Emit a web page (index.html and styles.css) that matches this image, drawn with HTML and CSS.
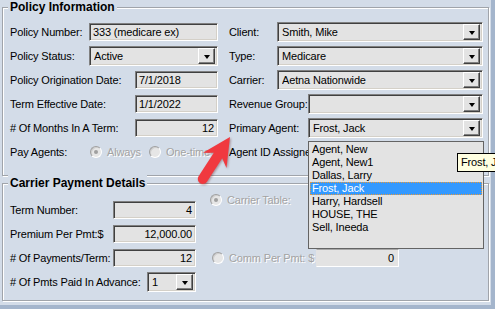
FILE: index.html
```html
<!DOCTYPE html>
<html>
<head>
<meta charset="utf-8">
<link rel="stylesheet" href="styles.css">
</head>
<body>
<div class="screen">
  <div class="main">
    <section class="group g1">
      <div class="gtitle">Policy Information</div>
      <div class="g1grid">
        <div class="cell"><span>Policy Number:</span><div class="field w-lg">333 (medicare ex)</div></div>
        <div class="cell"><span>Client:</span><div class="combo w-xl"><span class="val">Smith, Mike</span><i class="btn"></i></div></div>

        <div class="cell"><span>Policy Status:</span><div class="combo w-lg"><span class="val">Active</span><i class="btn"></i></div></div>
        <div class="cell"><span>Type:</span><div class="combo w-xl"><span class="val">Medicare</span><i class="btn"></i></div></div>

        <div class="cell"><span>Policy Origination Date:</span><div class="field w-sm">7/1/2018</div></div>
        <div class="cell"><span>Carrier:</span><div class="combo w-xl"><span class="val">Aetna Nationwide</span><i class="btn"></i></div></div>

        <div class="cell"><span>Term Effective Date:</span><div class="field w-sm">1/1/2022</div></div>
        <div class="cell"><span>Revenue Group:</span><div class="combo w-md"><span class="val"></span><i class="btn"></i></div></div>

        <div class="cell"><span># Of Months In A Term:</span><div class="field w-sm num">12</div></div>
        <div class="cell"><span>Primary Agent:</span><div class="combo w-md"><span class="val">Frost, Jack</span><i class="btn"></i></div></div>

        <div class="cell start"><span class="lbl-pay">Pay Agents:</span>
          <span class="radio checked"></span><span class="dis r-text">Always</span>
          <span class="radio"></span><span class="dis">One-time</span>
        </div>
        <div class="cell start"><span>Agent ID Assigned:</span></div>
      </div>
    </section>

    <section class="group g2">
      <div class="gtitle">Carrier Payment Details</div>
      <div class="g2body">
        <div class="g2left">
          <div class="cell"><span>Term Number:</span><div class="field w-sm num">4</div></div>
          <div class="cell"><span>Premium Per Pmt:$</span><div class="field w-sm num">12,000.00</div></div>
          <div class="cell"><span># Of Payments/Term:</span><div class="field w-sm num">12</div></div>
          <div class="cell"><span># Of Pmts Paid In Advance:</span><div class="combo w-xs"><span class="val">1</span><i class="btn"></i></div></div>
        </div>
        <div class="g2right">
          <div class="rrow"><span class="radio checked"></span><span class="dis">Carrier Table:</span></div>
          <div class="rrow comm"><span class="radio"></span><span class="dis comm-lbl">Comm Per Pmt: $</span><div class="field flat w-sm num">0</div></div>
        </div>
      </div>
    </section>
  </div>

  <div class="listbox">
    <div class="item">Agent, New</div>
    <div class="item">Agent, New1</div>
    <div class="item">Dallas, Larry</div>
    <div class="item sel">Frost, Jack</div>
    <div class="item">Harry, Hardsell</div>
    <div class="item">HOUSE, THE</div>
    <div class="item">Sell, Ineeda</div>
  </div>

  <div class="tooltip">Frost, Jack</div>

  <svg class="arrow" width="495" height="309" viewBox="0 0 495 309">
    <path transform="translate(230 137) rotate(-57)" d="M0,0 L-28,-14 L-22,-5 L-50,-5 A5,5 0 0 0 -50,5 L-22,5 L-28,14 Z" fill="#f0393f"/>
  </svg>
</div>
</body>
</html>
```
FILE: styles.css
```css
:root {
  --bg: #d3dce8;
  --strip: #a4b5cc;
  --face: #e3e3e3;
}
* { box-sizing: border-box; }
html, body { margin: 0; padding: 0; }
body {
  width: 495px;
  height: 309px;
  overflow: hidden;
  font-family: "Liberation Sans", Arial, sans-serif;
  font-size: 11px;
  letter-spacing: -0.15px;
  color: #000;
}
.screen {
  position: relative;
  width: 495px;
  height: 309px;
  background: var(--strip);
  overflow: hidden;
}
.main {
  width: 491px;
  height: 305px;
  background: var(--bg);
  padding-top: 7px;
  padding-left: 2px;
}
.group {
  border: 1px solid #a0a4aa;
  box-shadow: inset 1px 1px 0 #fff, 1px 1px 0 #fff;
  width: 487px;
}
.g1 { height: 169px; }
.g2 { height: 118px; margin-top: 7px; }
.gtitle {
  display: table;
  margin: -9px 0 0 5px;
  padding: 0 2px;
  background: var(--bg);
  font-weight: bold;
  font-size: 12px;
  letter-spacing: 0;
  line-height: 16px;
}
.g1grid {
  margin: 7px 0 0 7px;
  display: grid;
  grid-template-columns: 208px 254px;
  grid-auto-rows: 20px;
  column-gap: 11px;
  row-gap: 4px;
}
.cell {
  display: flex;
  align-items: center;
  justify-content: space-between;
  white-space: nowrap;
}
.cell.start { justify-content: flex-start; }
.lbl-pay { width: 80px; }
.r-text { margin-right: 8px; }

.field {
  height: 18px;
  line-height: 16px;
  padding: 0 3px;
  background: var(--face);
  border: 1px solid;
  border-color: #808080 #fff #fff #808080;
  box-shadow: inset 1px 1px 0 #404040, inset -1px -1px 0 #d4d0c8;
  overflow: hidden;
  white-space: nowrap;
}
.field.num { text-align: right; }
.field.flat {
  border-color: #a8a8a8 #fff #fff #e3e3e3;
  box-shadow: none;
  padding-right: 4px;
}
.combo {
  height: 20px;
  display: flex;
  align-items: center;
  background: var(--face);
  border: 1px solid;
  border-color: #808080 #fff #fff #808080;
  box-shadow: inset 1px 1px 0 #404040, inset -1px -1px 0 #d4d0c8;
  padding: 2px 2px 2px 4px;
}
.combo .val { flex: 1; line-height: 16px; overflow: hidden; white-space: nowrap; }
.btn {
  width: 17px;
  height: 16px;
  background: var(--face);
  border: 1px solid;
  border-color: #fff #404040 #404040 #fff;
  box-shadow: inset -1px -1px 0 #808080;
  display: flex;
  align-items: center;
  justify-content: center;
}
.btn::after {
  content: "";
  border-top: 4px solid #000;
  border-left: 3.5px solid transparent;
  border-right: 3.5px solid transparent;
  margin-top: 1px;
}
.w-xs { width: 49px; }
.w-sm { width: 83px; }
.w-lg { width: 129px; }
.w-md { width: 175px; }
.w-xl { width: 206px; }

.radio {
  width: 12px;
  height: 12px;
  border-radius: 50%;
  background: #e6e6e6;
  border: 1px solid;
  border-color: #a0a0a0 #fff #fff #a0a0a0;
  box-shadow: inset 1px 1px 0 #cfcfcf;
  display: inline-flex;
  align-items: center;
  justify-content: center;
  margin-right: 5px;
  flex: none;
}
.radio.checked::after {
  content: "";
  width: 4px;
  height: 4px;
  border-radius: 50%;
  background: #a0a0a0;
}
.dis {
  color: #a3a3a3;
  text-shadow: 1px 1px 0 #fff;
}

.g2body {
  display: flex;
  margin: -1px 0 0 7px;
}
.g2left {
  width: 186px;
  padding-top: 10px;
  display: grid;
  grid-auto-rows: 20px;
  row-gap: 4px;
}
.g2right {
  margin-left: 14px;
  display: flex;
  flex-direction: column;
}
.rrow {
  height: 20px;
  display: flex;
  align-items: center;
  white-space: nowrap;
}
.rrow.comm { margin-top: 38px; margin-left: 2px; }
.comm-lbl { width: 87px; }

.listbox {
  position: absolute;
  left: 308px;
  top: 141px;
  width: 176px;
  height: 108px;
  background: var(--face);
  border: 1px solid #646464;
  padding: 1px 1px 0;
}
.item {
  height: 13px;
  line-height: 13px;
  padding-left: 2px;
  white-space: nowrap;
}
.item.sel {
  background: #3399ff;
  color: #fff;
  outline: 1px dotted #e89a3a;
  outline-offset: -1px;
}
.tooltip {
  position: absolute;
  left: 457px;
  top: 153px;
  width: 70px;
  height: 19px;
  background: #ffffe1;
  border: 1px solid #000;
  padding-left: 3px;
  line-height: 17px;
  white-space: nowrap;
}
.arrow {
  position: absolute;
  left: 0;
  top: 0;
  pointer-events: none;
  filter: drop-shadow(1px 1px 1px rgba(80,0,0,0.35));
}
```
